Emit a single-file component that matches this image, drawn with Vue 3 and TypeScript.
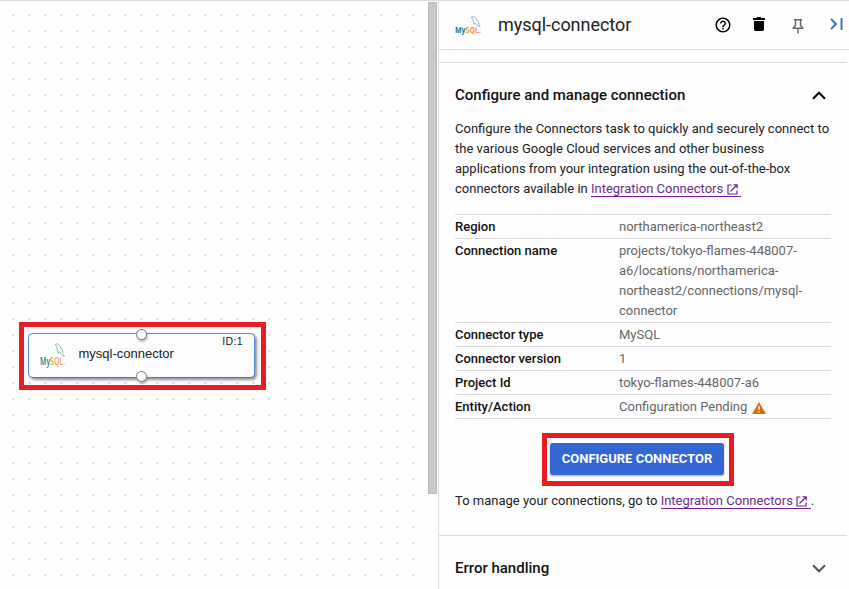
<script setup lang="ts">
interface Detail {
  label: string
  lines: string[]
  warning?: boolean
}

const details: Detail[] = [
  { label: 'Region', lines: ['northamerica-northeast2'] },
  {
    label: 'Connection name',
    lines: [
      'projects/tokyo-flames-448007-',
      'a6/locations/northamerica-',
      'northeast2/connections/mysql-',
      'connector',
    ],
  },
  { label: 'Connector type', lines: ['MySQL'] },
  { label: 'Connector version', lines: ['1'] },
  { label: 'Project Id', lines: ['tokyo-flames-448007-a6'] },
  { label: 'Entity/Action', lines: ['Configuration Pending'], warning: true },
]

const intro: string[] = [
  'Configure the Connectors task to quickly and securely connect to',
  'the various Google Cloud services and other business',
  'applications from your integration using the out-of-the-box',
]
</script>

<template>
  <div class="app">
    <main class="canvas">
      <div class="dots"></div>
      <div class="node-highlight">
        <div class="node">
          <svg class="node-logo" viewBox="0 0 28 26">
            <path d="M15.500 2c2-.8 3.800.6 4.600 2.600.7 2 2.600 3 2.800 6.400M15.500 2c0 1.600 1.500 2.600 1.700 4.500 0 2.500.2 4.500 1.600 4.800l.8-1.500c.8 2 2.200 3.400 4.200 4.700l.7-.8-2-1.600" fill="none" stroke="#6d9fb4" stroke-width=".8" />
            <text x="0" y="22.500" textLength="25" lengthAdjust="spacingAndGlyphs" fill="#26788f">My<tspan fill="#eda04b">SQL.</tspan></text>
          </svg>
          <span class="node-name">mysql-connector</span>
          <span class="node-id">ID:1</span>
          <i class="port port-top"></i>
          <i class="port port-bottom"></i>
        </div>
      </div>
    </main>
    <div class="scrollbar"><div class="thumb"></div></div>
    <aside class="panel">
      <header class="head">
        <svg class="head-logo" viewBox="0 0 28 20">
          <path d="M16.500 1c2-.8 3.800.2 4.600 2 .7 1.600 2.600 2.400 2.800 5M16.500 1c0 1.400 1.400 2 1.600 3.600 0 1.800.2 3.200 1.400 3.600l.8-1.200c.8 1.400 2 2.400 4.200 3.400l.8-.7-1.800-1.400" fill="none" stroke="#6d9fb4" stroke-width=".8" />
          <text x="0" y="16.800" textLength="26" lengthAdjust="spacingAndGlyphs" fill="#147a9c">My<tspan fill="#f29a38">SQL.</tspan></text>
        </svg>
        <h1>mysql-connector</h1>
        <svg class="ic help" viewBox="0 0 24 24"><path d="M11 18h2v-2h-2v2zm1-16C6.480 2 2 6.480 2 12s4.480 10 10 10 10-4.480 10-10S17.520 2 12 2zm0 18c-4.410 0-8-3.590-8-8s3.590-8 8-8 8 3.590 8 8-3.590 8-8 8zm0-14c-2.210 0-4 1.790-4 4h2c0-1.100.9-2 2-2s2 .9 2 2c0 2-3 1.750-3 5h2c0-2.250 3-2.500 3-5 0-2.210-1.790-4-4-4z" /></svg>
        <svg class="ic trash" viewBox="0 0 12 14"><path d="M1 4h10v8.300c0 1-.7 1.700-1.700 1.700H2.700c-1 0-1.700-.7-1.700-1.700zM0 1h3.500l1-1h3l1 1H12v2H0z" /></svg>
        <svg class="ic pin" viewBox="0 0 12 16"><path d="M2 1.700h8M3.500 1.500v6L1.500 9.600v.7h9v-.7l-2-2.100v-6M6 10v5.500" fill="none" stroke="#666" stroke-width="1.500" /></svg>
        <svg class="ic collapse" viewBox="0 0 13 12"><path d="M1 .8 6 6 1 11.200M11.500 0v12" fill="none" stroke="#3f6fc4" stroke-width="1.900" /></svg>
      </header>
      <div class="strip"></div>
      <section class="section">
        <div class="section-title">
          <h2>Configure and manage connection</h2>
          <svg class="chev" viewBox="0 0 14 9"><path d="M1 7.800 7 1.800l6 6" fill="none" stroke="#000" stroke-width="2.100" /></svg>
        </div>
        <p class="intro">
          <span v-for="line in intro" :key="line" class="line">{{ line }}</span>
          <span class="line">connectors available in <a class="link">Integration Connectors<svg viewBox="0 0 11 11"><path d="M4.500 1H1v9h9V6.500M6.500.8h3.700v3.700M10 1 3.500 7.500" /></svg></a></span>
        </p>
        <dl class="details">
          <div v-for="item in details" :key="item.label" class="row">
            <dt>{{ item.label }}</dt>
            <dd>
              <span v-for="line in item.lines" :key="line" class="line">{{ line }}<svg v-if="item.warning" class="warn" viewBox="0 0 14 12"><path d="M7 0 14 12H0z" fill="#db6d0a" /><path d="M7 4v4M7 9.200v1.400" stroke="#fff" stroke-width="1.300" /></svg></span>
            </dd>
          </div>
        </dl>
        <div class="button-highlight"><button type="button">CONFIGURE CONNECTOR</button></div>
        <p class="manage">To manage your connections, go to <a class="link">Integration Connectors<svg viewBox="0 0 11 11"><path d="M4.500 1H1v9h9V6.500M6.500.8h3.700v3.700M10 1 3.500 7.500" /></svg></a>.</p>
      </section>
      <section class="section error">
        <div class="section-title">
          <h2>Error handling</h2>
          <svg class="chev" viewBox="0 0 14 9"><path d="M1 1.200 7 7.200l6-6" fill="none" stroke="#555" stroke-width="2.100" /></svg>
        </div>
      </section>
    </aside>
  </div>
</template>

<style>
body {
  margin: 0;
  background: #fff;
  overflow: hidden;
}
</style>

<style scoped>
* {
  box-sizing: border-box;
}
.app {
  display: flex;
  width: 849px;
  height: 589px;
  overflow: hidden;
  border-top: 1px solid #dcdcdc;
  background: #fefefe;
  font-family: Roboto, "Liberation Sans", sans-serif;
  color: #202124;
}
.canvas {
  position: relative;
  width: 428px;
  padding: 321px 0 0 19px;
}
.dots {
  position: absolute;
  inset: 0 8px 0 0;
  background-image: conic-gradient(from 90deg at 3px 2px, transparent 180deg, #e2e2e2 180deg 270deg, transparent 270deg);
  background-position: 12px 13px;
  background-size: 16px 16px;
}
.node-highlight {
  position: relative;
  width: 247px;
  height: 68px;
  border: 5px solid #e81c24;
  padding: 6px 5px 7px 4px;
}
.node {
  position: relative;
  display: flex;
  width: 227px;
  height: 45px;
  border: 1px solid #5a90dc;
  border-bottom-color: #4a78ae;
  border-radius: 5px;
  background: #fdfdfd;
  box-shadow: 2px 2px 3px #8a93a0;
}
.node-logo {
  width: 28px;
  height: 26px;
  margin: 8px 0 0 11px;
  overflow: visible;
}
.node-logo text {
  font: 600 10.500px "Open Sans", sans-serif;
}
.node-name {
  margin: 11px 0 0 10.500px;
  font: 13px/17px "Liberation Sans", Arial, sans-serif;
  white-space: nowrap;
}
.node-id {
  margin: 0 0 0 auto;
  padding-right: 11px;
  font: 10.500px/14px "Liberation Sans", Arial, sans-serif;
  letter-spacing: .4px;
}
.port {
  position: absolute;
  left: 107px;
  width: 11px;
  height: 11px;
  border: 1px solid #777;
  border-radius: 50%;
  background: #fff;
  box-shadow: 1px 2px 2px #9999;
}
.port-top {
  top: -5px;
}
.port-bottom {
  bottom: -5px;
}
.scrollbar {
  width: 10px;
  padding-top: 1px;
}
.thumb {
  width: 9px;
  height: 492px;
  border: 1px solid #b8b8b8;
  background: #c8c8c8;
}
.panel {
  width: 411px;
  border-left: 1px solid #dcdcdc;
}
.head {
  display: flex;
  align-items: flex-start;
  height: 49px;
  border-bottom: 1px solid #dadce0;
}
.head-logo {
  width: 28px;
  height: 20px;
  margin: 15px 0 0 16px;
  overflow: visible;
}
.head-logo text {
  font: 700 9px "Open Sans", sans-serif;
}
h1 {
  width: 215px;
  margin: 12px 0 0 15px;
  font-size: 18px;
  font-weight: 400;
  line-height: 24px;
  letter-spacing: -.03px;
  white-space: nowrap;
}
.ic {
  flex: none;
}
.help {
  width: 18px;
  height: 18px;
  margin: 15px 0 0 1px;
}
.trash {
  width: 12px;
  height: 14px;
  margin: 16px 0 0 21px;
}
.pin {
  width: 12px;
  height: 16px;
  margin: 17px 0 0 27px;
}
.collapse {
  width: 13px;
  height: 12px;
  margin: 17px 0 0 26px;
}
.strip {
  width: 408px;
  height: 13px;
  border-bottom: 1px solid #dadce0;
}
.section {
  width: 408px;
  padding: 20px 16px 0;
}
.section-title {
  display: flex;
  justify-content: space-between;
  align-items: center;
  height: 24px;
  padding-right: 5px;
}
h2 {
  margin: 0;
  font-size: 15px;
  font-weight: 500;
  line-height: 24px;
  color: #111;
  white-space: nowrap;
}
.chev {
  width: 14px;
  height: 9px;
}
p,
dl,
dd {
  margin: 0;
}
.line {
  display: block;
  white-space: nowrap;
}
.intro {
  padding-top: 12px;
  font-size: 13px;
  line-height: 20px;
}
.link {
  display: inline-block;
  height: 16px;
  border-bottom: 1px solid #7b1fa2;
  color: #6b2c91;
  line-height: 16px;
}
.link svg {
  width: 11px;
  height: 11px;
  margin: 0 3.500px -2px 3.500px;
  fill: none;
  stroke: #6b2c91;
  stroke-width: 1.200;
}
.details {
  width: 376px;
  margin-top: 15px;
  border-top: 1px solid #dcdcdc;
  font-size: 13px;
  line-height: 20px;
}
.row {
  display: flex;
  padding: 2px 0 1px;
  border-bottom: 1px solid #dcdcdc;
}
dt {
  width: 164px;
  font-weight: 500;
  color: #111;
}
dd {
  color: #666;
}
.warn {
  width: 14px;
  height: 12px;
  margin: 0 0 -3px 5px;
}
.button-highlight {
  width: 192px;
  height: 53px;
  margin: 14px 0 0 87px;
  border: 5px solid #e81c24;
  padding: 5px 5px 6px 3px;
}
button {
  display: block;
  width: 174px;
  height: 32px;
  border: 0;
  border-radius: 3px;
  padding: 0;
  background: #3367d6;
  box-shadow: 0 1px 2px #7779;
  color: #fff;
  font: 700 13px/32px Roboto, sans-serif;
  white-space: nowrap;
}
.manage {
  padding-top: 5px;
  font-size: 13px;
  line-height: 20px;
  white-space: nowrap;
}
.error {
  margin-top: 24px;
  border-top: 1px solid #dadce0;
}
</style>
